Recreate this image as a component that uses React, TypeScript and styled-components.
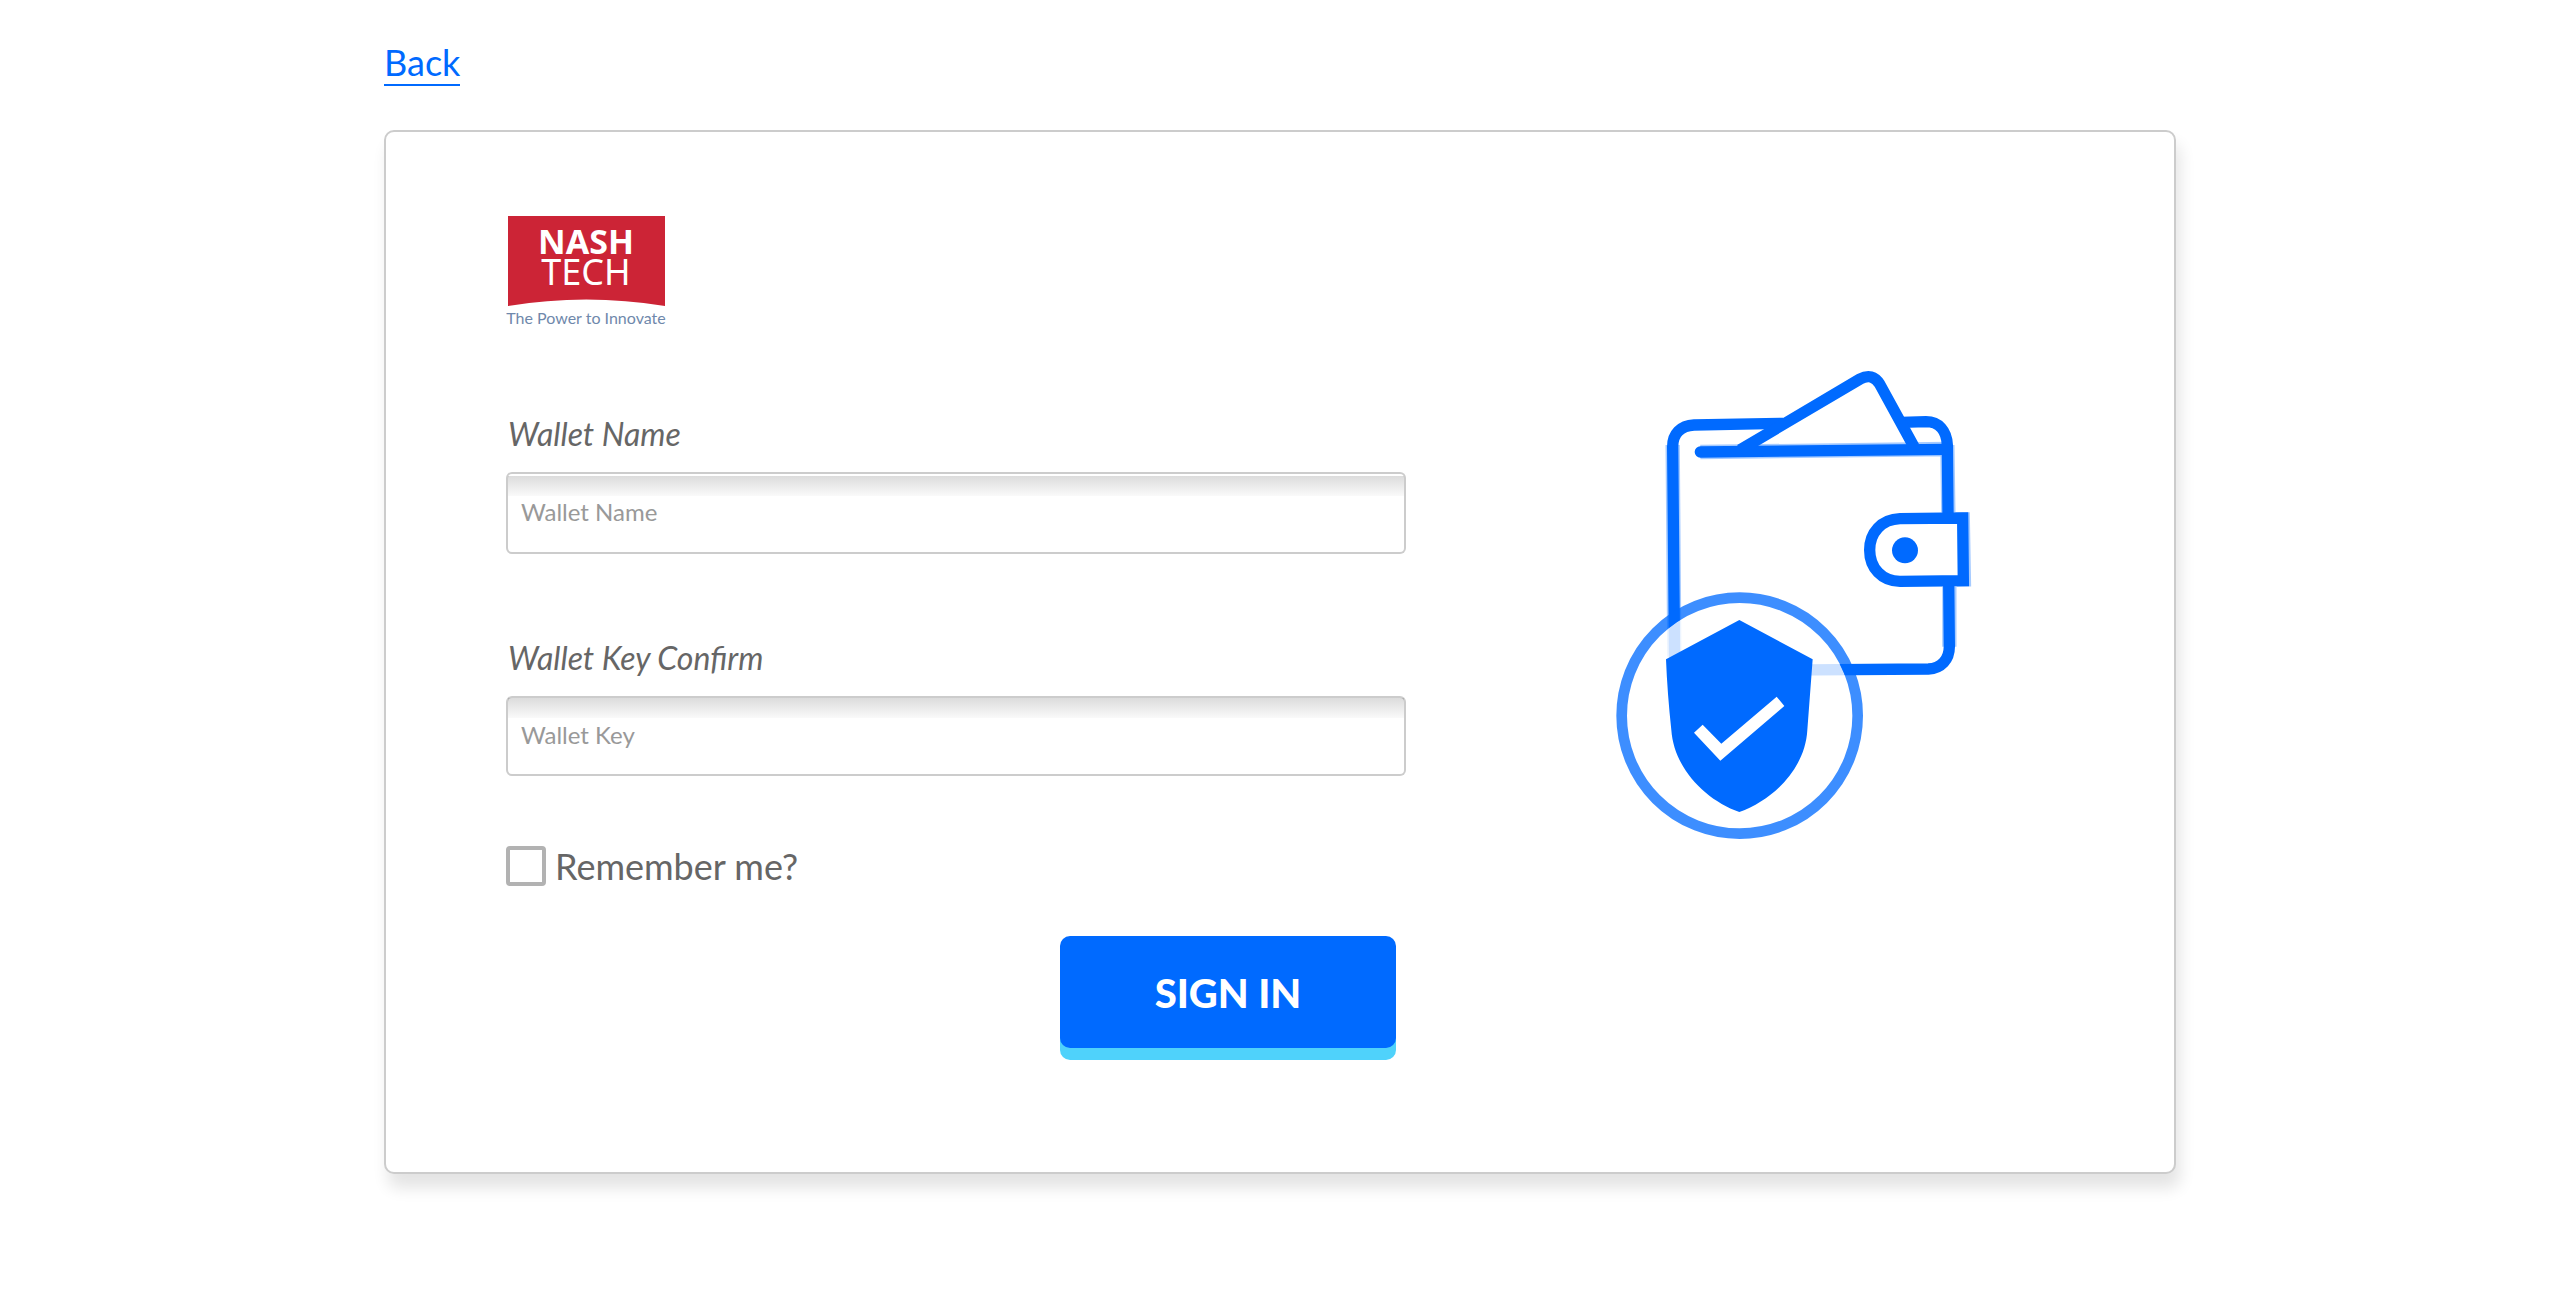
import React from "react";
import styled, { createGlobalStyle } from "styled-components";

const blue = "#006aff";

const GlobalStyle = createGlobalStyle`
  *, *::before, *::after { box-sizing: border-box; }
  body {
    margin: 0;
    background: #fff;
    color: #666;
    font-family: Lato, "Open Sans", sans-serif;
  }
`;

const Page = styled.main`
  width: 70%;
  margin: 0 auto;
  padding: 40px 0 80px;
  display: flex;
  flex-direction: column;
  align-items: flex-start;
  gap: 44px;
`;

const BackLink = styled.a`
  color: ${blue};
  font-size: 36px;
  line-height: 44px;
  text-decoration: none;
  border-bottom: 2px solid ${blue};
`;

const Card = styled.section`
  width: 100%;
  display: grid;
  grid-template-columns: 85fr 64fr;
  padding: 84px 0 124px;
  background: #fff;
  border: 2px solid #ccc;
  border-radius: 10px;
  box-shadow: 4px 14px 16px rgba(0, 0, 0, 0.11);
`;

const SignInForm = styled.form`
  display: flex;
  flex-direction: column;
  padding-left: 120px;
`;

const LogoImage = styled.svg`
  display: block;
  width: 160px;
  height: 114px;
  margin-bottom: 84px;
`;

const Field = styled.div`
  display: flex;
  flex-direction: column;
  gap: 18px;

  & + & {
    margin-top: 84px;
  }
`;

const FieldLabel = styled.label`
  font-size: 32px;
  font-style: italic;
  line-height: 40px;
  padding-left: 2px;
`;

const TextInput = styled.input<{ $ridge?: boolean }>`
  width: 100%;
  height: ${(p) => (p.$ridge ? 82 : 80)}px;
  padding: 0 13px 3px;
  border: 2px solid rgba(0, 0, 0, 0.2);
  border-radius: 6px;
  outline: none;
  background: #fff linear-gradient(#dcdcdc, #fafafa) no-repeat 0
    ${(p) => (p.$ridge ? 2 : 0)}px / 100% 20px;
  color: #666;
  font: 24px/30px Lato, "Open Sans", sans-serif;

  &::placeholder {
    color: #999;
    opacity: 1;
  }
`;

const Remember = styled.label`
  display: flex;
  align-items: center;
  align-self: flex-start;
  gap: 9px;
  margin-top: 70px;
  font-size: 36px;
  line-height: 40px;
`;

const Checkbox = styled.input`
  appearance: none;
  width: 40px;
  height: 40px;
  margin: 0;
  border: 4px solid #b2b2b2;
  border-radius: 4px;
  background: #fff;

  &:checked {
    background: ${blue};
  }
`;

const Actions = styled.div`
  display: flex;
  justify-content: flex-end;
  margin-top: 50px;
  padding-right: 10px;
`;

const SubmitButton = styled.button`
  width: 336px;
  height: 112px;
  padding: 2px 0 0;
  border: 0;
  border-radius: 10px;
  background: ${blue};
  box-shadow: 0 12px 0 #4fd2fb;
  color: #fff;
  font: 900 40px/48px Lato, "Open Sans", sans-serif;
  cursor: pointer;
`;

const Aside = styled.div`
  display: flex;
  justify-content: center;
  align-items: flex-start;
  padding: 150px 0 0 10px;
`;

const Illustration = styled.svg`
  width: 370px;
  height: 484px;
`;

function Logo() {
  return (
    <LogoImage viewBox="0 0 160 114" role="img" aria-label="NashTech">
      <path d="M2 0H159V90Q80 77 2 90Z" fill="#cc2436" />
      <g fontFamily="'Noto Sans', 'Open Sans', sans-serif" textAnchor="middle" fill="#fff">
        <text>
          <tspan x="80" y="38" fontSize="34" fontWeight="700">
            NASH
          </tspan>
          <tspan x="80" y="69" fontSize="36">
            TECH
          </tspan>
        </text>
      </g>
      <text
        x="80"
        y="108"
        fontFamily="Lato, 'Open Sans', sans-serif"
        fontSize="16"
        textAnchor="middle"
        fill="#6f88ab"
      >
        The Power to Innovate
      </text>
    </LogoImage>
  );
}

function WalletIllustration() {
  return (
    <Illustration viewBox="0 0 1110 1452" aria-hidden="true">
      <g transform="translate(90 -48)" fill="none" stroke={blue}>
        <g strokeWidth="43" opacity="0.35">
          <path d="M103 920L98 285M181 306L922 297M922 285L925 487M928 710L928 890M968 487L972 710" />
        </g>
        <g strokeWidth="34">
          <path d="M430 220L162 225C122 227 98 252 98 290L104 963L865 957C904 955 928 928 928 890L922 285C920 242 896 215 858 215L785 217" />
          <path d="M181 306L922 298" strokeLinecap="round" />
          <path d="M300 300L660 87Q697 67 719 102L822 290" />
          <path
            d="M968 504L780 506C724 508 689 548 689 600C689 654 726 694 780 694L970 692Z"
            fill="#fff"
          />
        </g>
        <circle cx="795" cy="601" r="39" fill={blue} stroke="none" />
        <circle cx="299" cy="1097" r="338" fill="#fff" fillOpacity="0.8" stroke="none" />
        <circle cx="299" cy="1097" r="354" strokeWidth="32" opacity="0.76" />
        <g stroke="none" transform="translate(-120 660)">
          <path
            d="M418 150L638 268L622 480C616 595 520 690 418 726C316 690 222 595 214 480Q202 370 198 268Z"
            fill={blue}
          />
          <path d="M282 488L308 464L364 521L530 380L553 408L361 572Z" fill="#fff" />
        </g>
      </g>
    </Illustration>
  );
}

export default function App() {
  return (
    <>
      <GlobalStyle />
      <Page>
        <BackLink href="#back">Back</BackLink>
        <Card>
          <SignInForm onSubmit={(e) => e.preventDefault()}>
            <Logo />
            <Field>
              <FieldLabel htmlFor="wallet-name">Wallet Name</FieldLabel>
              <TextInput id="wallet-name" type="text" placeholder="Wallet Name" $ridge />
            </Field>
            <Field>
              <FieldLabel htmlFor="wallet-key">Wallet Key Confirm</FieldLabel>
              <TextInput id="wallet-key" type="password" placeholder="Wallet Key" />
            </Field>
            <Remember>
              <Checkbox type="checkbox" />
              Remember me?
            </Remember>
            <Actions>
              <SubmitButton type="submit">SIGN IN</SubmitButton>
            </Actions>
          </SignInForm>
          <Aside>
            <WalletIllustration />
          </Aside>
        </Card>
      </Page>
    </>
  );
}
